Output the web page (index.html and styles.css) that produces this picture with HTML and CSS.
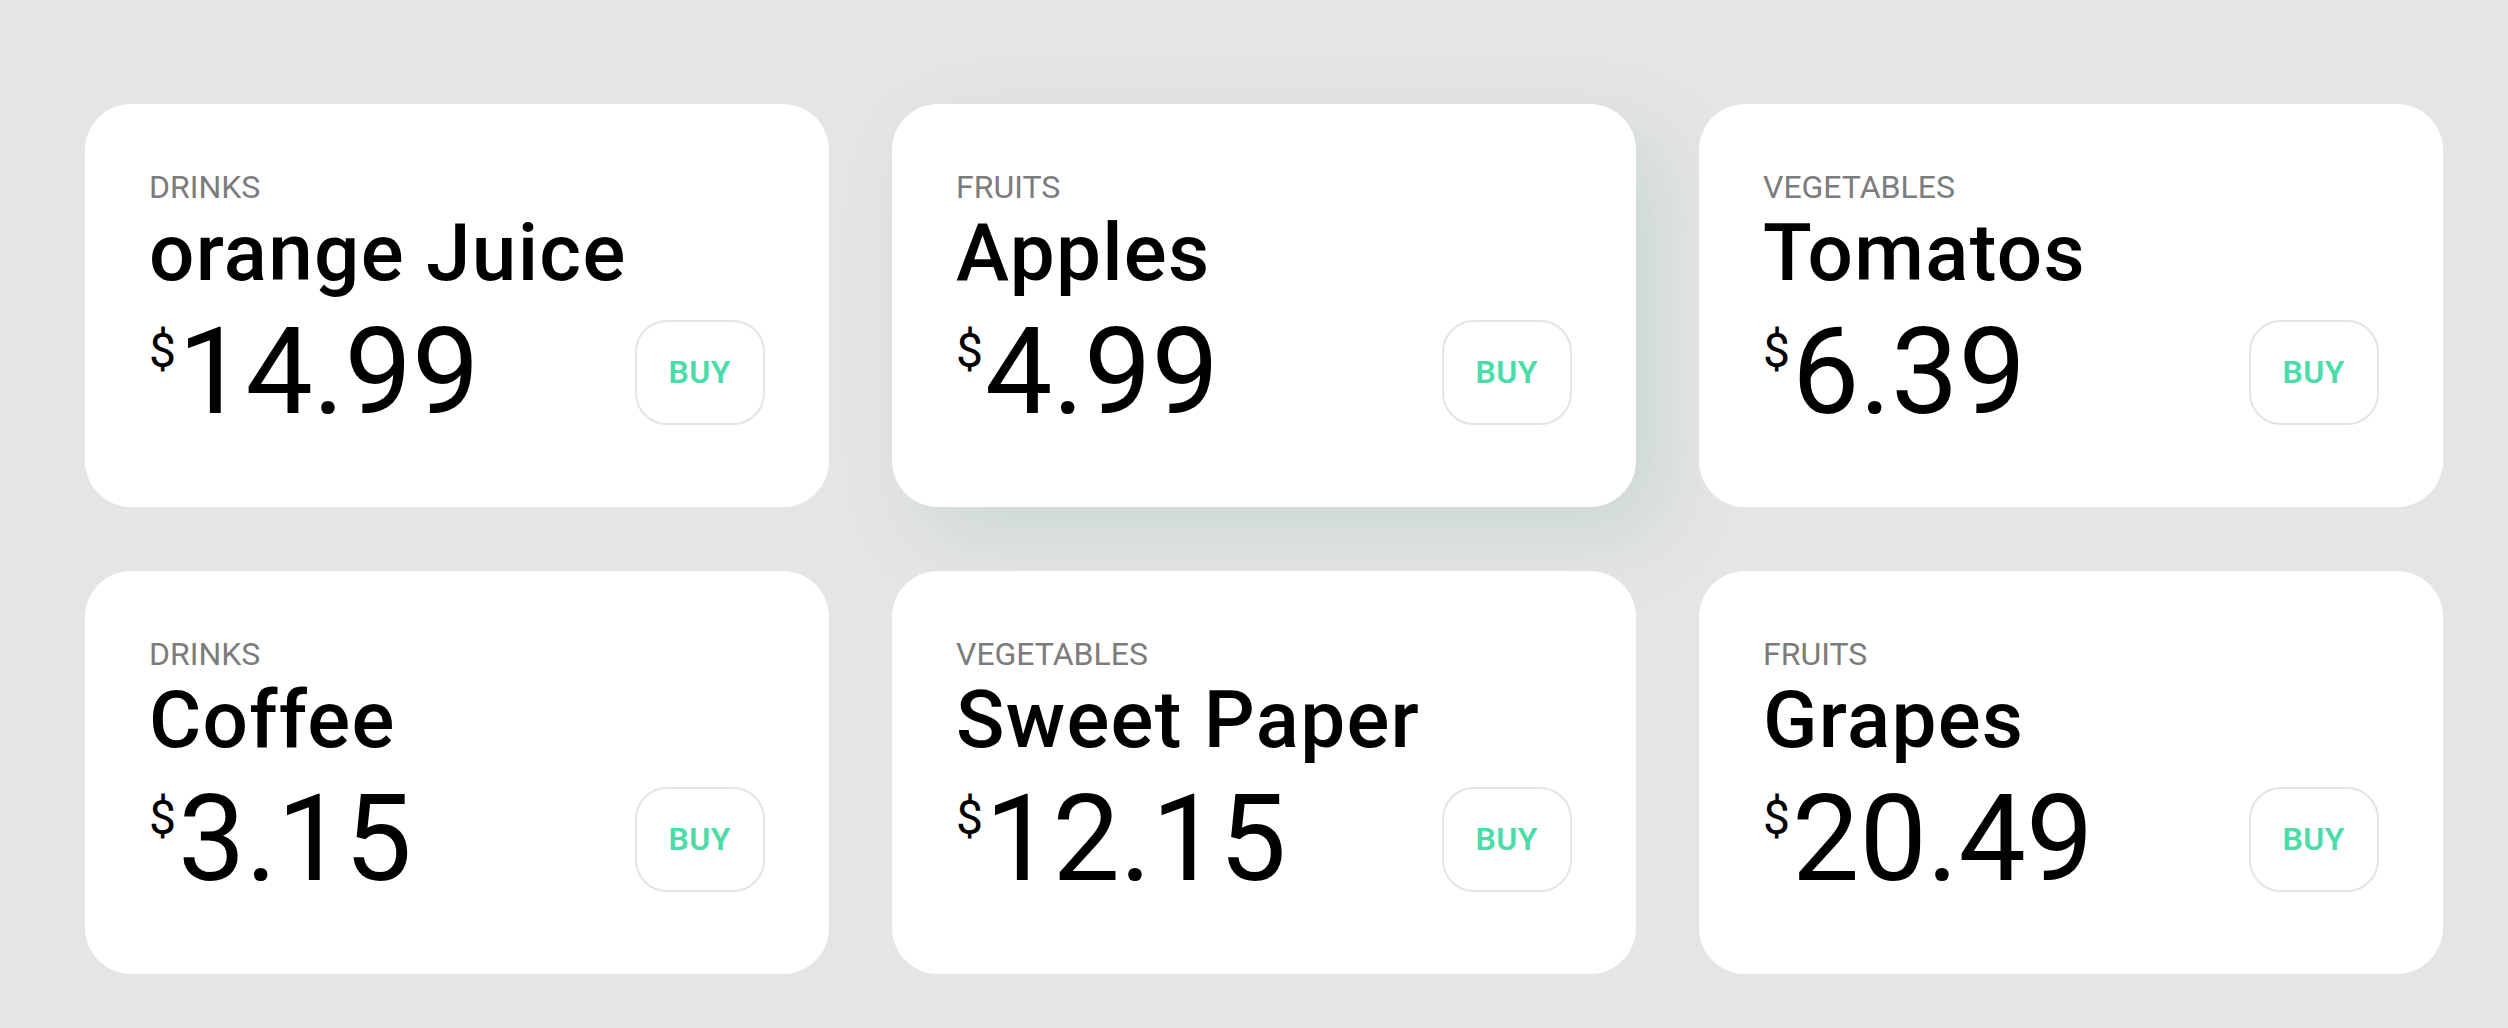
FILE: index.html
```html
<!DOCTYPE html>
<html lang="en">
<head>
<meta charset="utf-8">
<title>Products</title>
<link rel="stylesheet" href="styles.css">
</head>
<body>
<main class="grid">
  <article class="card">
    <div class="category">DRINKS</div>
    <h2 class="name">orange Juice</h2>
    <div class="row">
      <div class="price"><span class="cur">$</span><span class="amount">14.99</span></div>
      <button class="buy">BUY</button>
    </div>
  </article>
  <article class="card card-active">
    <div class="category">FRUITS</div>
    <h2 class="name">Apples</h2>
    <div class="row">
      <div class="price"><span class="cur">$</span><span class="amount">4.99</span></div>
      <button class="buy">BUY</button>
    </div>
  </article>
  <article class="card">
    <div class="category">VEGETABLES</div>
    <h2 class="name">Tomatos</h2>
    <div class="row">
      <div class="price"><span class="cur">$</span><span class="amount">6.39</span></div>
      <button class="buy">BUY</button>
    </div>
  </article>
  <article class="card">
    <div class="category">DRINKS</div>
    <h2 class="name">Coffee</h2>
    <div class="row">
      <div class="price"><span class="cur">$</span><span class="amount">3.15</span></div>
      <button class="buy">BUY</button>
    </div>
  </article>
  <article class="card">
    <div class="category">VEGETABLES</div>
    <h2 class="name">Sweet Paper</h2>
    <div class="row">
      <div class="price"><span class="cur">$</span><span class="amount">12.15</span></div>
      <button class="buy">BUY</button>
    </div>
  </article>
  <article class="card">
    <div class="category">FRUITS</div>
    <h2 class="name">Grapes</h2>
    <div class="row">
      <div class="price"><span class="cur">$</span><span class="amount">20.49</span></div>
      <button class="buy">BUY</button>
    </div>
  </article>
</main>
</body>
</html>
```

FILE: styles.css
```css
html, body {
  margin: 0;
  padding: 0;
  background: #e5e5e5;
  font-family: Roboto, "Liberation Sans", Arial, sans-serif;
}

.grid {
  display: grid;
  grid-template-columns: repeat(3, 744px);
  column-gap: 63px;
  row-gap: 64px;
  padding: 104px 0 0 85px;
}

.card {
  background: #ffffff;
  border-radius: 46px;
  padding: 64px;
  display: flex;
  flex-direction: column;
}

.card-active {
  box-shadow: 28px 30px 80px rgba(60, 150, 115, 0.15);
}

.category {
  font-size: 32px;
  line-height: 38px;
  color: #7c7c7c;
  font-weight: 400;
}

.name {
  margin: 0;
  font-size: 80px;
  line-height: 95px;
  font-weight: 500;
  letter-spacing: 1.3px;
  color: #000;
}

.row {
  display: flex;
  align-items: center;
  justify-content: space-between;
  height: 142px;
}

.price {
  display: flex;
  align-items: flex-start;
  color: #000;
}

.cur {
  font-size: 48px;
  line-height: 48px;
  margin-top: 26px;
  margin-right: 2px;
}

.amount {
  font-size: 120px;
  line-height: 142px;
  font-weight: 400;
}

.buy {
  font-family: Roboto, "Liberation Sans", Arial, sans-serif;
  font-size: 32px;
  font-weight: 600;
  letter-spacing: 0.5px;
  line-height: 37px;
  color: #4cdca9;
  background: #fff;
  border: 2px solid #e4e4e4;
  border-radius: 32px;
  padding: 32px 32px;
  margin: 0;
}
```
